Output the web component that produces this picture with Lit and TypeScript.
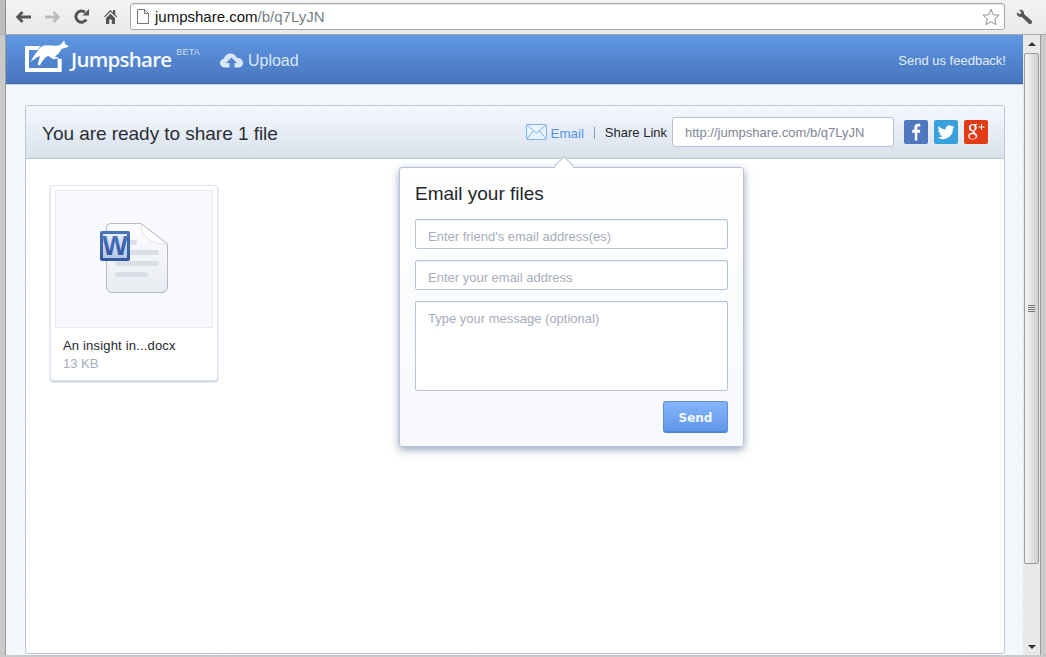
import { LitElement, html, css, svg } from "lit";
import { customElement } from "lit/decorators.js";

const backIcon = svg`<svg width="15" height="12" viewBox="0 0 15 12"><path d="M6.500 1 1.700 6l4.800 5M2.200 6H15" fill="none" stroke="#555" stroke-width="2.800"/></svg>`;
const fwdIcon = svg`<svg width="15" height="12" viewBox="0 0 15 12"><path d="M8.500 1l4.800 5-4.800 5M12.800 6H0" fill="none" stroke="#bcbcbc" stroke-width="2.800"/></svg>`;
const reloadIcon = svg`<svg width="15" height="15" viewBox="0 0 15 15"><path d="M12.300 10.500A5.600 5.600 0 1 1 11 3.200" fill="none" stroke="#555" stroke-width="3"/><path d="M8.500 6.500H15V0z" fill="#555"/></svg>`;
const homeIcon = svg`<svg width="13" height="15" viewBox="0 0 13 15"><path d="M0 7.500 6.500 1 9 3.500V1h2.200v4.700L13 7.500l-.8.8-5.700-5.500L.8 8.300zM2 9l4.500-4.300L11 9v6H7.800v-4.500H5.200V15H2z" fill="#555"/></svg>`;
const pageIcon = svg`<svg width="12" height="15" viewBox="0 0 12 15"><path d="M.5.500h7l4 4v10H.5zM7.500.500v4h4" fill="#fff" stroke="#777"/></svg>`;
const starIcon = svg`<svg width="18" height="18" viewBox="0 0 19 18"><path d="M9.500 1l2.400 5.600 6.100.5-4.600 4 1.400 6-5.300-3.200-5.300 3.200 1.400-6-4.600-4 6.100-.5z" fill="#fff" stroke="#8a8a8a"/></svg>`;
const wrenchIcon = svg`<svg width="16" height="16" viewBox="0 0 16 16"><path d="M1 3.200 3.600 5.600 5.600 3.600 3.200 1C5.600 0 8 1.400 8 4c0 .5 0 .8-.1 1L15.400 11.600c.8.8.8 1.800.1 2.800-.8 1-2 1.100-2.900.2L5.600 7.700C3 8.600 0 6.200 1 3.200z" fill="#555"/></svg>`;
const logo = svg`<svg width="45" height="32" viewBox="15 12 135 96"><path d="M15 30H62L52 42H27V96H113V68H125V108H15z" fill="#fff"/><path d="M132 13 136 25 147 31 136 36 125 38C120 48 113 56 104 61L118 67 100 70 86 60C76 62 68 72 60 88L53 86C56 76 58 70 60 60 50 64 42 70 32 78 38 64 48 52 56 40 62 32 70 28 82 28 96 28 108 30 118 28 124 26 128 20 132 13z" fill="#fff"/></svg>`;
const cloud = svg`<svg width="23" height="15" viewBox="0 0 23 15"><path d="M5 14.500C2 14.500 0 12.500 0 10c0-2.200 1.500-4 3.800-4.300C4.800 2.500 7.500.5 10.500.5c3 0 5.500 1.800 6.500 4.500 3.500-.3 6 2 6 5 0 2.500-2 4.500-5 4.500h-3.500V10H17l-5.500-5.500L6 10h3.500v4.500z" fill="#dbe7f7"/></svg>`;
const mail = svg`<svg width="21" height="16" viewBox="0 0 21 16"><rect x=".5" y=".5" width="20" height="15" rx="1" fill="#eaf3fd" stroke="#7db2ea"/><path d="M1 1l9.500 8L20 1M1 15l6.500-8.500M20 15l-6.500-8.500" fill="none" stroke="#7db2ea"/></svg>`;
const fb = svg`<svg width="24" height="24" viewBox="0 0 24 24"><rect width="24" height="24" rx="2" fill="#4f78bf"/><path d="M13.300 20.500v-7.700h2.600l.4-3h-3V8c0-.9.300-1.400 1.500-1.400h1.500V3.900c-.3 0-1.200-.1-2.200-.1-2.300 0-3.800 1.300-3.800 3.800v2.200H8.200v3h2.600v7.700z" fill="#fff"/></svg>`;
const tw = svg`<svg width="24" height="24" viewBox="0 0 24 24"><rect width="24" height="24" rx="2" fill="#38a1db"/><path d="M20.500 6.800c-.6.300-1.300.5-2 .6.700-.4 1.300-1.100 1.500-1.900-.7.400-1.400.7-2.200.9a3.500 3.500 0 0 0-6 3.200C8.900 9.400 6.400 8 4.700 5.900c-.9 1.600-.4 3.600 1.100 4.600-.6 0-1.100-.2-1.600-.4 0 1.700 1.200 3.100 2.800 3.400-.5.100-1 .2-1.600.1.500 1.400 1.700 2.300 3.200 2.400A7 7 0 0 1 3.500 17.500a9.900 9.900 0 0 0 15.300-8.800c.7-.5 1.300-1.100 1.700-1.900z" fill="#fff"/></svg>`;
const gp = svg`<svg width="24" height="24" viewBox="0 0 24 24"><rect width="24" height="24" rx="2" fill="#e23a14"/><path d="M13.500 4h-4.400C6.500 4 4.800 5.700 4.800 7.800c0 2 1.500 3.500 3.500 3.500h.7c-.2.400-.2.800 0 1.300-.2.100-4.800 0-4.800 3.700 0 2 2 3.300 4.400 3.300 2.800 0 4.600-1.700 4.600-3.600 0-2.700-3-3.100-3-4.400 0-1 2.600-1.500 2.600-4.100 0-1.200-.6-2-1.200-2.500h1.100zM8.500 5.100c1.200 0 2.100 1.300 2.200 2.700.1 1.300-.5 2.400-1.600 2.500-1.200 0-2.200-1.300-2.300-2.700-.1-1.400.6-2.500 1.700-2.500zm.6 9c1.600.5 2.600 1.300 2.600 2.600 0 1.300-1.100 2.200-2.900 2.200-1.900 0-3.300-1.100-3.300-2.500 0-1.500 1.900-2.400 3.600-2.300z" fill="#fff"/><path d="M17 4v2.500h-2.500v1H17V10h1V7.500h2.500v-1H18V4z" fill="#fff"/></svg>`;
const docIcon = svg`<svg class="doc" width="68" height="71" viewBox="0 0 68 71">
  <defs>
    <linearGradient id="pg" x1="0" y1="0" x2="0" y2="1"><stop offset="0" stop-color="#fdfdfe"/><stop offset="1" stop-color="#e8ebf2"/></linearGradient>
    <linearGradient id="wd" x1="0" y1="0" x2="0" y2="1"><stop offset="0" stop-color="#4a74ba"/><stop offset="1" stop-color="#35579f"/></linearGradient>
    <linearGradient id="wi" x1="0" y1="0" x2="0" y2="1"><stop offset="0" stop-color="#e6edf8"/><stop offset="1" stop-color="#b3c5e4"/></linearGradient>
    <linearGradient id="wl" x1="0" y1="0" x2="0" y2="1"><stop offset="0" stop-color="#4f7cc4"/><stop offset="1" stop-color="#2a4c9a"/></linearGradient>
  </defs>
  <path d="M10.500.5H41L67.500 21V64a5.500 5.500 0 0 1-5.500 5.500H12a5.500 5.500 0 0 1-5.500-5.500V4.500a4 4 0 0 1 4-4z" fill="url(#pg)" stroke="#b4b9c4"/>
  <path d="M41 .5C41 12 48 21 67.500 21z" fill="#fff" stroke="#dfe2e9"/>
  <path d="M41 .5 67.500 21" fill="none" stroke="#b9bec9"/>
  <g fill="#d9dee7"><rect x="15" y="17" width="22" height="5" rx="2.500"/><rect x="15" y="27" width="44" height="5" rx="2.500"/><rect x="15" y="38" width="44" height="5" rx="2.500"/><rect x="15" y="49" width="33" height="5" rx="2.500"/></g>
  <rect x="0" y="8" width="30" height="30" rx="2" fill="url(#wd)"/>
  <rect x="3" y="11" width="24" height="24" fill="url(#wi)"/>
  <text x="15" y="32" text-anchor="middle" font-family="Liberation Sans, Arial, sans-serif" font-weight="700" font-size="27" fill="url(#wl)">W</text>
</svg>`;

@customElement("app-root")
export class AppRoot extends LitElement {
  static styles = css`
    :host { display: block; width: 1046px; height: 657px; overflow: hidden; font-family: "Liberation Sans", Arial, sans-serif; color: #222; }
    .window { width: 1046px; height: 657px; display: flex; flex-direction: column; background: #d6d6d6; }
    .toolbar { height: 35px; flex: none; display: flex; align-items: center; padding: 0 0 1px 11px; box-sizing: border-box; background: linear-gradient(#f4f4f4, #e8e8e8); border-left: 5px solid #bcbcbc; border-bottom: 1px solid #a9a9a9; box-shadow: inset 1px 0 #8f8f8f; }
    .nav { display: flex; align-items: center; justify-content: center; flex: none; }
    .nav svg { display: block; }
    .fwd { margin-left: 14px; } .reload { margin-left: 14px; } .home { margin-left: 15px; margin-top: -1px; }
    .omni { margin-left: 13px; width: 875px; height: 27px; flex: none; box-sizing: border-box; background: #fff; border: 1px solid #a8a8a8; border-radius: 3px; display: flex; align-items: center; padding: 0 4px 0 6px; font-size: 15px; box-shadow: inset 0 1px 1px #e4e4e4; }
    .omni .url { margin-left: 6px; color: #111; flex: 1; }
    .omni .url span { color: #767f88; }
    .wrench { margin-left: 11px; display: flex; }
    .main { flex: 1; min-height: 0; display: flex; }
    .frame-l { width: 6px; flex: none; background: #c9c9c9; box-shadow: inset -1px 0 #9c9c9c; }
    .frame-r { width: 6px; flex: none; background: #cbcbcb; box-shadow: inset 1px 0 #9c9c9c; }
    .frame-b { height: 2px; flex: none; background: #c9c9c9; }
    .page { flex: 1; min-width: 0; display: flex; flex-direction: column; position: relative; background-color: #f3f6fb; background-image: repeating-linear-gradient(45deg, rgba(255,255,255,.22) 0 1px, transparent 1px 3px); }
    .topbar { height: 49px; flex: none; box-sizing: border-box; display: flex; align-items: center; padding: 3px 17px 0 19px; background: linear-gradient(#5f96e2, #4876bd); border-bottom: 1px solid #3d66a6; box-shadow: 0 1px 0 #c6d5ea; color: #fff; }
    .brand { display: flex; align-items: flex-start; align-self: flex-start; margin-top: 2px; }
    .brand svg { display: block; }
    .wordmark { font-family: "Open Sans", "Liberation Sans", sans-serif; font-size: 20.500px; font-weight: 600; line-height: 28px; margin: 5px 0 0 1px; letter-spacing: -.75px; color: #f7faff; }
    .beta { font-size: 9px; line-height: 10px; color: #cfdff5; margin: 7px 0 0 5px; letter-spacing: .2px; }
    .upload { display: flex; align-items: center; gap: 5px; margin-left: 20px; font-size: 16px; color: #dbe7f7; }
    .feedback { margin-left: auto; font-size: 13px; color: #e2ecfa; }
    .content { flex: 1; min-height: 0; padding: 21px 18px 0 19px; display: flex; }
    .card { flex: 1; box-sizing: border-box; height: 549px; background: #fff; border: 1px solid #bcc7d8; border-radius: 3px; display: flex; flex-direction: column; }
    .card-head { height: 53px; flex: none; box-sizing: border-box; display: flex; align-items: center; padding: 0 16px 0 16px; background: linear-gradient(#f5f8fe, #d9e1ec); border-bottom: 1px solid #bcc7d8; border-radius: 3px 3px 0 0; }
    .title { font-size: 19px; letter-spacing: -.04px; color: #2b2f36; margin-top: 4px; }
    .actions { margin-left: auto; display: flex; align-items: center; }
    .email { display: flex; align-items: center; gap: 4px; font-size: 13.300px; color: #4d94ee; }
    .email span { margin-top: 2px; }
    .sep { width: 1px; height: 12px; background: #8b98b3; margin: 1px 10px 0 10px; }
    .share { font-size: 13px; color: #23272e; }
    .link { width: 222px; height: 30px; box-sizing: border-box; margin: 0 10px 0 5px; padding-left: 12px; display: flex; align-items: center; background: #fff; border: 1px solid #b7c1d6; border-radius: 3px; font-size: 13px; color: #7d8698; }
    .social { display: flex; gap: 6px; } .social svg { display: block; }
    .card-body { flex: 1; padding: 26px 0 0 24px; }
    .tile { width: 168px; height: 196px; box-sizing: border-box; background: #fff; border: 1px solid #dfe6f0; border-radius: 3px; box-shadow: 0 1px 2px #b4c2d8; padding: 4px; }
    .thumb { height: 138px; box-sizing: border-box; background: #f8f9fc; border: 1px solid #e7eaf1; display: flex; align-items: center; justify-content: center; }
    .doc { display: block; margin-top: -2px; }
    .fname { font-size: 13px; letter-spacing: .18px; color: #23272e; margin: 10px 0 0 8px; line-height: 15px; }
    .fsize { font-size: 13px; color: #a5aebd; margin: 3px 0 0 8px; line-height: 15px; }
    .pop { position: absolute; left: 393px; top: 132px; width: 345px; height: 280px; box-sizing: border-box; background: linear-gradient(#fff, #f6f8fc); border: 1px solid #b9c3d4; border-radius: 3px; box-shadow: 0 3px 8px rgba(70,95,135,.55); padding: 15px 15px 0 15px; display: flex; flex-direction: column; }
    .arrow { position: absolute; left: 157px; top: -9px; width: 13px; height: 13px; background: #fff; border-left: 1px solid #b9c3d4; border-top: 1px solid #b9c3d4; transform: rotate(45deg); }
    .pop h2 { margin: 0 0 15px; font-size: 19px; font-weight: 400; line-height: 21px; color: #22262c; }
    .field { box-sizing: border-box; height: 30px; background: #fff; border: 1px solid #b9c3d6; border-radius: 2px; padding: 0 12px; margin-bottom: 11px; font-size: 13px; line-height: 34px; color: #a6adbb; box-shadow: inset 0 1px 1px #eceff4; }
    .field.area { height: 90px; line-height: 33px; margin-bottom: 10px; }
    .foot { display: flex; justify-content: flex-end; }
    .send { width: 65px; height: 32px; box-sizing: border-box; padding-top: 2px; display: flex; align-items: center; justify-content: center; background: linear-gradient(#85b5fb, #5f97ea); border: 1px solid #5d8fd8; border-bottom: 2px solid #4f84d2; border-radius: 3px; color: #f4f8ff; font: 700 12px "DejaVu Sans", sans-serif; }
    .bar { width: 17px; flex: none; display: flex; flex-direction: column; align-items: center; background: #e9e9e9; box-sizing: border-box; }
    .up { height: 17px; width: 17px; display: flex; align-items: center; justify-content: center; }
    .tri-up { width: 0; height: 0; border: 4px solid transparent; border-top: 0; border-bottom: 4px solid #333; }
    .tri-dn { width: 0; height: 0; border: 4px solid transparent; border-bottom: 0; border-top: 4px solid #333; }
    .thumbbar { margin-top: 1px; height: 511px; width: 15px; box-sizing: border-box; background: linear-gradient(90deg, #f4f4f4, #cfcfcf); border: 1px solid #9a9a9a; border-radius: 2px; display: flex; flex-direction: column; align-items: center; justify-content: center; gap: 1px; }
    .thumbbar i { width: 7px; height: 1px; background: #777; display: block; }
    .spacer { flex: 1; }
  `;

  render() {
    return html`<div class="window">
      <div class="toolbar">
        <span class="nav back">${backIcon}</span>
        <span class="nav fwd">${fwdIcon}</span>
        <span class="nav reload">${reloadIcon}</span>
        <span class="nav home">${homeIcon}</span>
        <div class="omni">${pageIcon}<span class="url">jumpshare.com<span>/b/q7LyJN</span></span>${starIcon}</div>
        <span class="wrench">${wrenchIcon}</span>
      </div>
      <div class="main">
        <div class="frame-l"></div>
        <div class="page">
          <div class="topbar">
            <div class="brand">${logo}<span class="wordmark">Jumpshare</span><span class="beta">BETA</span></div>
            <div class="upload">${cloud}<span>Upload</span></div>
            <div class="feedback">Send us feedback!</div>
          </div>
          <div class="content">
            <div class="card">
              <div class="card-head">
                <div class="title">You are ready to share 1 file</div>
                <div class="actions">
                  <div class="email">${mail}<span>Email</span></div>
                  <span class="sep"></span>
                  <span class="share">Share Link</span>
                  <div class="link">http://jumpshare.com/b/q7LyJN</div>
                  <div class="social">${fb}${tw}${gp}</div>
                </div>
              </div>
              <div class="card-body">
                <div class="tile">
                  <div class="thumb">${docIcon}</div>
                  <div class="fname">An insight in...docx</div>
                  <div class="fsize">13 KB</div>
                </div>
              </div>
            </div>
          </div>
          <div class="pop">
            <div class="arrow"></div>
            <h2>Email your files</h2>
            <div class="field">Enter friend's email address(es)</div>
            <div class="field">Enter your email address</div>
            <div class="field area">Type your message (optional)</div>
            <div class="foot"><div class="send">Send</div></div>
          </div>
        </div>
        <div class="bar">
          <div class="up"><span class="tri-up"></span></div>
          <div class="thumbbar"><i></i><i></i><i></i><i></i></div>
          <div class="spacer"></div>
          <div class="up"><span class="tri-dn"></span></div>
        </div>
        <div class="frame-r"></div>
      </div>
      <div class="frame-b"></div>
    </div>`;
  }
}
